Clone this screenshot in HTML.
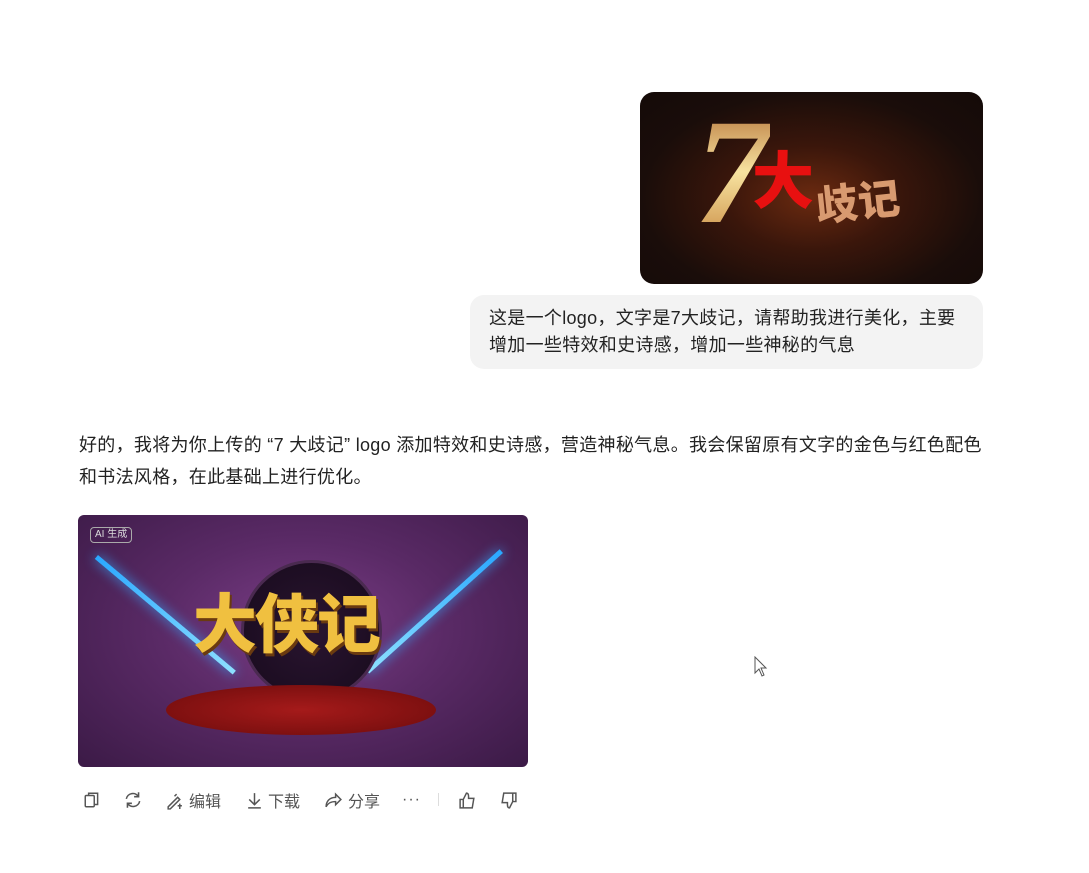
<!DOCTYPE html>
<html><head><meta charset="utf-8"><style>
body{margin:0;width:1089px;height:873px;background:#fff;font-family:"Liberation Sans","Noto Sans CJK SC",sans-serif;position:relative;overflow:hidden;color:#222}
.abs{position:absolute}
.img1{left:640px;top:92px;width:343px;height:192px;border-radius:14px;background:radial-gradient(ellipse at 50% 55%,#6b2a10 0%,#3a160b 35%,#1a0d0a 70%,#140a08 100%);overflow:hidden}
.bubble{left:470px;top:295px;width:475px;height:56px;padding:10px 19px 8px;background:#f3f3f3;border-radius:14px;font-size:18px;letter-spacing:0.3px;line-height:27px;color:#222;white-space:nowrap}
.resp{left:79px;top:429px;width:920px;font-size:18px;letter-spacing:0.3px;line-height:32px;color:#222;white-space:nowrap}
.img2{left:78px;top:515px;width:450px;height:252px;border-radius:6px;overflow:hidden;background:radial-gradient(ellipse at 50% 45%,#7a3d86 0%,#5a2a66 45%,#3b1a46 100%)}
.tb{top:788px;height:24px;font-size:16px;color:#555;display:flex;align-items:center}
</style></head><body>
<div class="abs img1">
 <div class="abs" style="left:55px;top:5px;font-size:150px;font-weight:bold;font-style:italic;line-height:1;font-family:'Liberation Serif',serif;background:linear-gradient(#b06a30,#f7e3a0,#c88840);-webkit-background-clip:text;color:transparent">7</div>
 <div class="abs" style="left:112px;top:60px;font-size:62px;font-weight:900;color:#e81010;line-height:1">大</div>
 <div class="abs" style="left:176px;top:90px;font-size:42px;font-weight:900;color:#d89a70;line-height:1;transform:rotate(-6deg)">歧记</div>
</div>
<div class="abs bubble">这是一个logo，文字是7大歧记，请帮助我进行美化，主要<br>增加一些特效和史诗感，增加一些神秘的气息</div>
<div class="abs resp">好的，我将为你上传的 “7 大歧记” logo 添加特效和史诗感，营造神秘气息。我会保留原有文字的金色与红色配色<br>和书法风格，在此基础上进行优化。</div>
<div class="abs img2">
 <div class="abs" style="left:12px;top:12px;font-size:10px;color:#ddd;border:1px solid #aaa;border-radius:4px;padding:0 4px;line-height:14px">AI 生成</div>
 <div class="abs" style="left:20px;top:40px;width:180px;height:5px;background:linear-gradient(90deg,#2aa8ff,#8de0ff);transform:rotate(40deg);transform-origin:0 0;box-shadow:0 0 12px #3af"></div>
 <div class="abs" style="left:425px;top:38px;width:180px;height:5px;background:linear-gradient(90deg,#2aa8ff,#8de0ff);transform:rotate(138deg);transform-origin:0 0;box-shadow:0 0 12px #3af"></div>
 <div class="abs" style="left:163px;top:45px;width:135px;height:135px;border-radius:50%;background:radial-gradient(#2a1530,#170a1c);border:3px solid #4a2a50"></div>
 <div class="abs" style="left:88px;top:170px;width:270px;height:50px;border-radius:50%;background:radial-gradient(ellipse,#a51a1a,#6e0c0c);"></div>
 <div class="abs" style="left:115px;top:78px;font-size:64px;font-weight:900;color:#f0c040;line-height:1;letter-spacing:-2px;text-shadow:2px 3px 0 #6a3a10">大侠记</div>
</div>
<svg class="abs" style="left:754px;top:656px" width="14" height="22" viewBox="0 0 14 22"><path d="M1 1V17L5 13L8 20L10 19L7 12L12 12Z" fill="#fff" stroke="#555" stroke-width="1"/></svg>
<div class="abs tb" style="left:83px">
<svg width="18" height="18" viewBox="0 0 16 16" fill="none" stroke="#555" stroke-width="1.3"><rect x="2" y="4" width="8" height="10" rx="1"/><path d="M5 4V2h8v10h-3"/></svg>
</div>
<div class="abs tb" style="left:123px"><svg width="20" height="20" viewBox="0 0 18 18" fill="none" stroke="#555" stroke-width="1.4"><path d="M3 8a6 6 0 0 1 11-2M15 10a6 6 0 0 1-11 2"/><path d="M14 2v4h-4M4 16v-4h4"/></svg></div>
<div class="abs tb" style="left:165px"><svg width="19" height="19" viewBox="0 0 18 18" fill="none" stroke="#555" stroke-width="1.4"><path d="M3 15L12 6l2 2-9 9H3zM11 3l-2 2M14 12v5M12 14h4"/></svg><span style="margin-left:5px">编辑</span></div>
<div class="abs tb" style="left:246px"><svg width="17" height="19" viewBox="0 0 16 18" fill="none" stroke="#555" stroke-width="1.4"><path d="M8 2v11M3 8l5 5 5-5M2 16h12"/></svg><span style="margin-left:5px">下载</span></div>
<div class="abs tb" style="left:324px"><svg width="19" height="19" viewBox="0 0 18 18" fill="none" stroke="#555" stroke-width="1.4"><path d="M11 3l5 5-5 5V10c-4 0-7 1-9 5 0-5 3-9 9-9z"/></svg><span style="margin-left:5px">分享</span></div>
<div class="abs tb" style="left:402px;letter-spacing:1px">···</div>
<div class="abs" style="left:438px;top:793px;width:1px;height:13px;background:#ddd"></div>
<div class="abs tb" style="left:458px"><svg width="19" height="19" viewBox="0 0 18 18" fill="none" stroke="#555" stroke-width="1.4"><path d="M2 8h3v8H2zM5 8l3-6c2 0 2 2 2 3v2h5l-1.5 9H5"/></svg></div>
<div class="abs tb" style="left:499px"><svg width="19" height="19" viewBox="0 0 18 18" fill="none" stroke="#555" stroke-width="1.4"><path d="M16 10h-3V2h3zM13 10l-3 6c-2 0-2-2-2-3v-2H3L4.5 2H13"/></svg></div>
</body></html>
